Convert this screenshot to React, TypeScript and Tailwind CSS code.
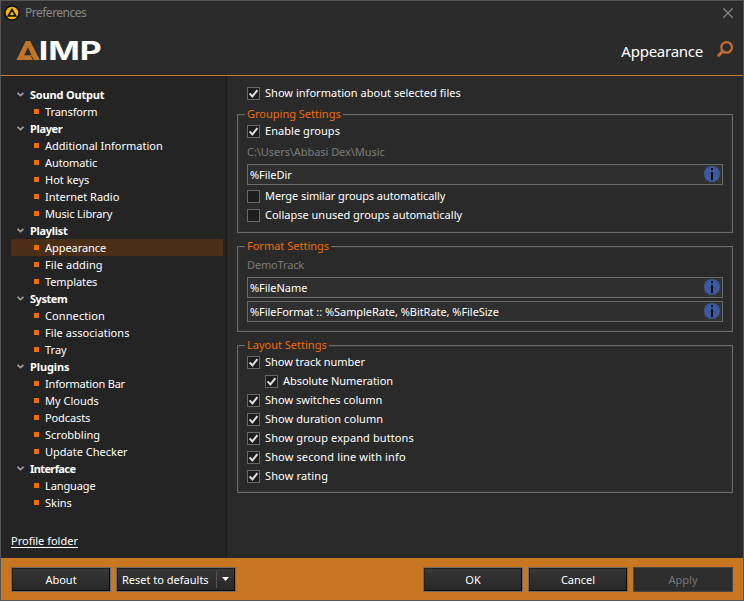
import React from "react";

type Item = { label: string; track?: string };
type Section = { title: string; track: string; items: Item[] };

const sections: Section[] = [
  {
    title: "Sound Output",
    track: "tracking-[-0.19px]",
    items: [{ label: "Transform", track: "tracking-[-0.1px]" }],
  },
  {
    title: "Player",
    track: "tracking-[-0.35px]",
    items: [
      { label: "Additional Information" },
      { label: "Automatic", track: "tracking-[-0.1px]" },
      { label: "Hot keys" },
      { label: "Internet Radio" },
      { label: "Music Library", track: "tracking-[-0.15px]" },
    ],
  },
  {
    title: "Playlist",
    track: "tracking-[-0.3px]",
    items: [
      { label: "Appearance", track: "tracking-[-0.05px]" },
      { label: "File adding", track: "tracking-[0.1px]" },
      { label: "Templates", track: "tracking-[-0.1px]" },
    ],
  },
  {
    title: "System",
    track: "tracking-[-0.45px]",
    items: [
      { label: "Connection", track: "tracking-[0.1px]" },
      { label: "File associations", track: "tracking-[0.05px]" },
      { label: "Tray" },
    ],
  },
  {
    title: "Plugins",
    track: "tracking-[-0.1px]",
    items: [
      { label: "Information Bar", track: "tracking-[-0.2px]" },
      { label: "My Clouds" },
      { label: "Podcasts", track: "tracking-[-0.1px]" },
      { label: "Scrobbling" },
      { label: "Update Checker" },
    ],
  },
  {
    title: "Interface",
    track: "tracking-[-0.6px]",
    items: [
      { label: "Language", track: "tracking-[-0.1px]" },
      { label: "Skins" },
    ],
  },
];

function Check({ label, checked = false, track = "" }: { label: string; checked?: boolean; track?: string }) {
  return (
    <label className="flex h-[19px] items-center">
      <span className="flex size-[13px] shrink-0 items-center justify-center border border-[#696969] bg-[#1d1d1d]">
        {checked && (
          <svg width="11" height="11" viewBox="0 0 11 11" fill="none" stroke="#dedede" strokeWidth="2.1">
            <path d="M1.6 5.4 L4.4 8.4 L9.4 2.2" />
          </svg>
        )}
      </span>
      <span className={`ml-[5px] pb-[2px] ${track}`}>{label}</span>
    </label>
  );
}

function Field({ value }: { value: string }) {
  return (
    <div className="flex h-[21px] items-center justify-between border border-[#6b6b6b] bg-[#2f2f2f] pr-px pl-[2px]">
      <span className="tracking-[-0.05px]">{value}</span>
      <svg width="17" height="17" viewBox="0 0 17 17">
        <rect width="17" height="17" fill="#333333" />
        <circle cx="8" cy="8" r="8" fill="#3a5c9e" />
        <rect x="7" y="2" width="2" height="2" fill="#05070c" />
        <rect x="7" y="6" width="2" height="8" fill="#05070c" />
      </svg>
    </div>
  );
}

function Group({ title, className, children }: { title: string; className: string; children: React.ReactNode }) {
  return (
    <fieldset className={`border border-[#6b6b6b] px-[9px] shadow-[inset_0_0_0_1px_#343434] ${className}`}>
      <legend className="-ml-[2px] h-[15px] bg-[#2a2a2a] px-[2px] leading-[13px] text-[#ee6c0a]">{title}</legend>
      {children}
    </fieldset>
  );
}

function Button({ label, className = "", disabled = false }: { label: string; className?: string; disabled?: boolean }) {
  return (
    <button
      className={`flex h-[25px] w-[100px] items-center justify-center border pt-px ${
        disabled
          ? "border-[#474747] bg-[#2d2d2d] text-[#777777]"
          : "border-[#6b6b6b] bg-linear-to-b from-[#383838] to-[#262626] text-white shadow-[inset_-1px_-1px_0_#0c0c0c,inset_1px_1px_0_#202020]"
      } ${className}`}
    >
      {label}
    </button>
  );
}

export default function App() {
  return (
    <div className="flex h-[601px] w-[744px] flex-col overflow-hidden border border-[#555555] bg-[#2a2a2a] font-['Noto_Sans','Open_Sans',sans-serif] text-[11px] leading-[17px] text-white">
      <header className="flex h-[75px] shrink-0 flex-col border-b border-[#c67822] bg-[#2b2b2b]">
        <div className="flex h-[24px] items-center justify-between pr-[9px] pl-[3px]">
          <div className="flex items-center">
            <svg width="16" height="16" viewBox="0 0 16 16">
              <circle cx="8" cy="8" r="7.8" fill="#0b0b0b" />
              <circle cx="8" cy="8" r="6.3" fill="#f8b70c" />
              <path d="M8 4.6 L11.6 10.9 H4.4 Z" fill="none" stroke="#1a1405" strokeWidth="1.8" />
            </svg>
            <span className="ml-[5px] pb-px text-[12px] tracking-[-0.5px] text-[#888888]">Preferences</span>
          </div>
          <svg width="12" height="12" viewBox="0 0 12 12" stroke="#858585" strokeWidth="1.3">
            <path d="M1.3 1.3 L10.7 10.7 M10.7 1.3 L1.3 10.7" />
          </svg>
        </div>
        <div className="flex grow items-center justify-between pr-[9px] pl-[15px]">
          <svg width="96" height="44" viewBox="0 -10 96 44">
            <path fillRule="evenodd" d="M9.8 3 H14.2 L23.8 22 H0.4 Z M12 9.2 L8.2 17.2 H15.6 Z" fill="#c0752a" />
            <path d="M15.2 18 L17.4 22" stroke="#2b2b2b" strokeWidth="1" />
            <text x="22.8" y="22" textLength="63" lengthAdjust="spacingAndGlyphs" fill="#ffffff" fontFamily="Inter, sans-serif" fontWeight="700" fontSize="26">IMP</text>
          </svg>
          <div className="flex items-center">
            <span className="pt-[2px] text-[15px] tracking-[-0.25px]">Appearance</span>
            <svg className="mb-[3px] ml-[13px]" width="18" height="18" viewBox="0 0 18 18" fill="none" stroke="#c46f31">
              <circle cx="10.6" cy="7.4" r="5.3" strokeWidth="2.2" />
              <path d="M6.8 11.2 L2.8 15.2" strokeWidth="3" strokeLinecap="round" />
            </svg>
          </div>
        </div>
      </header>

      <div className="flex min-h-0 grow">
        <nav className="flex w-[226px] flex-col border-r border-[#1b1b1b] bg-[#242424] pt-[10px] pl-[10px]">
          {sections.map((s) => (
            <div key={s.title}>
              <div className="flex h-[17px] items-center pl-[6px]">
                <svg className="-mt-px" width="7" height="5" viewBox="0 0 7 5" fill="none" stroke="#a0a0a0" strokeWidth="1.7">
                  <path d="M0.5 0.8 L3.5 3.6 L6.5 0.8" />
                </svg>
                <span className={`-mt-px ml-[6px] font-bold ${s.track}`}>{s.title}</span>
              </div>
              {s.items.map((i) => (
                <div
                  key={i.label}
                  className={`flex h-[17px] w-[212px] items-center pl-[23px] ${i.label === "Appearance" ? "bg-[#4a2f16]" : ""}`}
                >
                  <span className="size-[5px] bg-[#f46c05]" />
                  <span className={`-mt-px ml-[6px] ${i.track ?? ""}`}>{i.label}</span>
                </div>
              ))}
            </div>
          ))}
          <a className="mt-[21px] self-start underline underline-offset-2">Profile folder</a>
        </nav>

        <main className="flex grow flex-col pt-[8px] pr-[10px] pl-[10px]">
          <div className="pl-[10px]">
            <Check checked label="Show information about selected files" track="tracking-[0.03px]" />
          </div>
          <Group title="Grouping Settings" className="mt-[4px] h-[126px]">
            <Check checked label="Enable groups" track="tracking-[0.05px]" />
            <div className="mt-[2px] mb-[4px] tracking-[-0.06px] text-[#7c7c7c]">C:\Users\Abbasi Dex\Music</div>
            <Field value="%FileDir" />
            <div className="mt-[2px]">
              <Check label="Merge similar groups automatically" track="tracking-[-0.08px]" />
              <Check label="Collapse unused groups automatically" />
            </div>
          </Group>
          <Group title="Format Settings" className="mt-[6px] h-[93px]">
            <div className="mt-[2px] mb-[4px] tracking-[-0.15px] text-[#7c7c7c]">DemoTrack</div>
            <div className="flex flex-col gap-[3px]">
              <Field value="%FileName" />
              <Field value="%FileFormat :: %SampleRate, %BitRate, %FileSize" />
            </div>
          </Group>
          <Group title="Layout Settings" className="mt-[6px] h-[155px]">
            <Check checked label="Show track number" track="tracking-[-0.04px]" />
            <div className="pl-[18px]">
              <Check checked label="Absolute Numeration" track="tracking-[-0.04px]" />
            </div>
            <Check checked label="Show switches column" track="tracking-[0.04px]" />
            <Check checked label="Show duration column" track="tracking-[0.08px]" />
            <Check checked label="Show group expand buttons" track="tracking-[0.1px]" />
            <Check checked label="Show second line with info" track="tracking-[0.13px]" />
            <Check checked label="Show rating" track="tracking-[0.13px]" />
          </Group>
        </main>
      </div>

      <footer className="flex h-[42px] shrink-0 items-center gap-[5px] bg-[#c8761f] px-[10px]">
        <Button label="About" />
        <div className="flex h-[25px] w-[120px] items-center border border-[#6b6b6b] bg-linear-to-b from-[#383838] to-[#262626] pl-[5px] shadow-[inset_-1px_-1px_0_#0c0c0c,inset_1px_1px_0_#202020]">
          <span className="w-[94px] pt-px">Reset to defaults</span>
          <span className="h-[17px] w-px bg-[#555555]" />
          <svg className="ml-[5px]" width="7" height="4" viewBox="0 0 7 4">
            <path d="M0 0 H7 L3.5 4 Z" fill="#ffffff" />
          </svg>
        </div>
        <Button label="OK" className="ml-auto" />
        <Button label="Cancel" />
        <Button label="Apply" disabled />
      </footer>
    </div>
  );
}
